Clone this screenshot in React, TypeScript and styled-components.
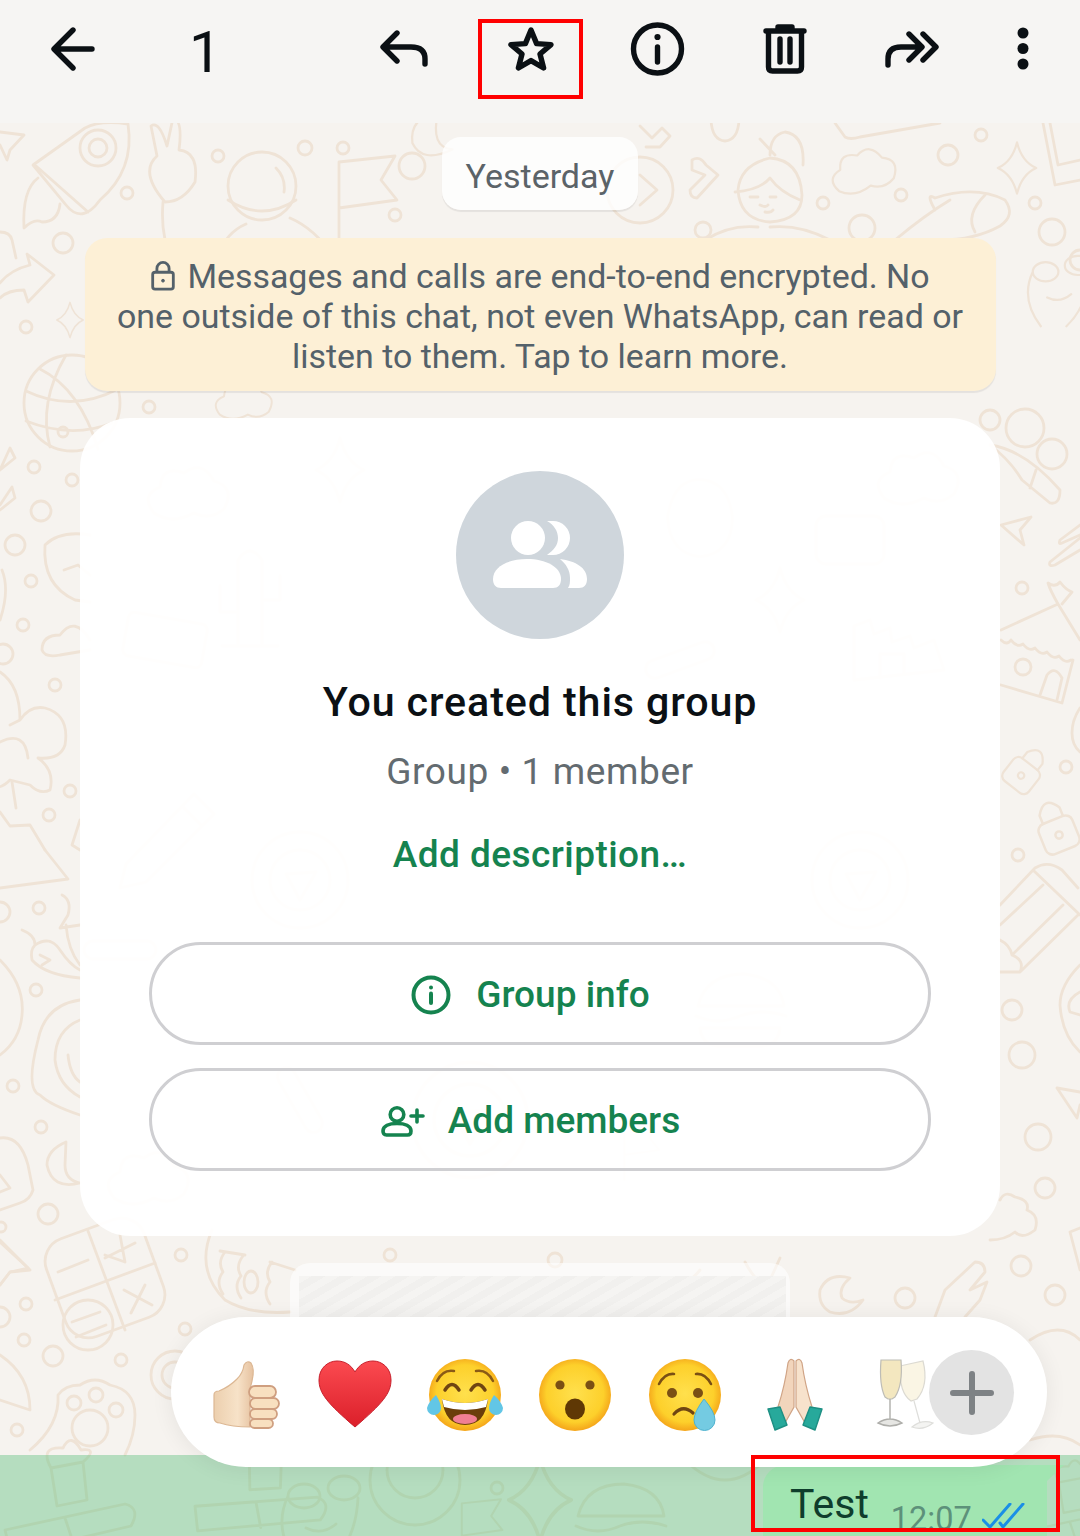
import React from "react";
import styled, { createGlobalStyle } from "styled-components";

/* ---------- doodle wallpaper ---------- */
const t = (x: number, y: number, s: string, r = 0, k = 1) =>
  `<g transform="translate(${x} ${y}) rotate(${r}) scale(${k})">${s}</g>`;
const rings = (list: number[][]) => list.map(([x, y, r]) => `<circle cx="${x}" cy="${y}" r="${r}"/>`).join("");
const p = (d: string) => `<path d="${d}"/>`;
const star4 = p("M0 -32 Q6 -8 24 0 Q6 8 0 32 Q-6 8 -24 0 Q-6 -8 0 -32Z");
const flag = p("M-26 -38 V50 M-26 -38 L30 -44 L16 -20 L32 0 L-26 8");
const hand = p("M-20 30 Q-46 0 -28 -16 L-34 -46 Q-26 -52 -18 -26 L-12 -54 Q-2 -52 -6 -22 Q14 -20 10 10 Q-2 30 -20 30Z M-22 30 Q-26 80 0 100");
const astro = `<circle r="34"/>` + p("M14 -18 Q24 -8 22 6 M-34 14 Q0 36 34 14 M-16 38 Q-44 50 -50 92 M28 32 Q56 44 76 78");
const cloud = p("M-36 18 Q-50 0 -30 -8 Q-28 -30 -6 -22 Q12 -36 24 -14 Q46 -8 34 14 Q20 26 4 18 Q-18 30 -36 18Z");
const pencil = p("M-44 34 L24 -36 L44 -16 L-24 52 L-50 58Z M12 -24 L32 -4");
const lock = `<rect x="-20" y="-6" width="40" height="36" rx="8"/>` + p("M-12 -6 V-16 Q0 -36 12 -16 V-6") + `<circle cy="12" r="4"/>`;
const cactus = p("M-12 56 V-30 Q0 -48 12 -30 V56 M12 10 H30 V-14 M-12 22 H-30 V-4 M-28 56 H28");
const castle = p("M-46 40 V-14 L-30 -20 L-26 -6 L-10 -12 L-8 2 L10 -4 L14 8 L34 0 L44 30 Z M-20 38 V14 H4 V34");
const burger = p("M-42 -4 Q-34 -36 4 -36 Q40 -32 44 -4Z M-44 6 Q-22 16 0 6 Q22 -2 46 6 M-40 18 H40 Q38 36 20 36 H-20 Q-38 36 -40 18Z");
const glasses = p("M-34 -4 a16 12 0 1 0 32 0 a16 12 0 1 0 -32 0 M6 -12 a16 12 0 1 0 32 0 a16 12 0 1 0 -32 0 M-34 -4 Q-50 30 -24 64 M36 -2 Q34 40 8 64 M-16 28 Q0 36 14 24");
const target = `<circle r="48"/><circle r="30"/>` + p("M-14 -6 L16 -8 L0 20Z");
const pill = `<rect x="-36" y="-9" width="72" height="18" rx="9"/>`;
const tube = p("M-60 40 L60 14 Q76 18 66 36 L-54 64Z M0 28 L8 52 M-14 -22 L18 -28 L22 10 L-8 16Z M-14 -22 Q-26 -44 -2 -42 Q6 -58 16 -40 Q34 -42 18 -28");

const doodles = [
  // top-left
  p("M33 165 L85 128 Q100 120 128 124 Q135 170 100 200 Q82 225 66 205Z M36 166 L88 212"),
  rings([[98, 148, 18], [98, 148, 9], [127, 193, 6], [63, 243, 10], [218, 156, 6], [26, 327, 6], [149, 407, 6], [305, 148, 7], [343, 148, 6], [412, 166, 13], [395, 215, 6], [208, 283, 8]]),
  p("M38 178 Q22 190 24 228 Q34 218 42 222 Q58 222 60 204"),
  p("M0 132 L24 135 L10 150 L7 160 L0 145"),
  p("M0 283 Q10 270 30 265 L27 254 L54 275 L28 302 L24 290 Q8 290 0 298"),
  p("M0 232 Q10 232 12 240 L16 258"),
  t(70, 320, star4, 0, .55),
  t(185, 172, hand), t(262, 186, astro), t(365, 200, flag),
  t(300, 262, `<ellipse rx="26" ry="18"/>` + p("M-8 4 l8 -10 l4 16 M10 -6 l6 8"), -10),
  t(72, 403, `<circle r="48"/>` + p("M-46 -12 Q0 10 46 -14 M-32 -34 Q8 -14 26 46 M-6 -48 Q-34 0 -22 44 M-46 18 Q0 36 40 20") + `<circle cx="-9" cy="29" r="5"/>`),
  t(245, 402, cloud, 0, .7),
  t(430, 135, p("M10 -28 Q-26 -22 -22 10 Q-10 36 28 18 Q0 16 10 -28Z"), 0, .8),
  // top-right
  `<circle cx="640" cy="190" r="33"/>`, p("M640 175 L657 190 L640 205"),
  p("M640 126 L652 138 L662 128 L670 136 L660 147 L646 147"),
  p("M711 120 Q712 140 725 141 Q738 140 739 120"),
  p("M692 160 Q700 155 706 165 L718 175 L697 198 Q690 198 690 190 L705 175 L692 170Z"),
  p("M738 190 Q740 165 770 158 Q800 160 802 195 Q802 220 770 222 Q740 220 738 190Z M735 192 Q760 190 770 178 Q780 192 800 200"),
  p("M760 139 L775 155 M770 155 Q770 135 785 132 Q805 135 803 165"),
  p("M750 197 h8 M770 197 h6 M760 205 q6 3 8 0 M765 212 q6 1 8 -2"),
  p("M705 240 Q730 224 758 227 M770 227 Q800 224 830 240"), `<circle cx="703" cy="230" r="8"/>`,
  p("M835 123 L845 137 Q850 140 860 137 L940 123"),
  t(865, 172, cloud, -10, .8),
  rings([[948, 155, 10], [981, 135, 6], [901, 195, 6], [823, 203, 6], [1035, 203, 6], [862, 228, 13], [1052, 232, 13], [1080, 260, 10]]),
  t(1017, 168, star4, 0, .8),
  p("M1043 123 L1055 185 L1080 180 M1050 123 L1058 165 L1080 160"),
  p("M935 198 Q975 185 1005 200 Q1016 215 1000 226 Q975 240 940 240 M895 240 Q925 215 950 200 M935 198 Q925 192 935 210 M985 195 Q965 215 975 232"),
  t(1060, 275, glasses, 0, .8),
  // left strip
  rings([[34, 467, 6], [72, 480, 6], [41, 511, 10], [15, 545, 10], [31, 581, 6], [23, 625, 6], [55, 685, 6], [70, 791, 6], [49, 815, 6], [3, 654, 10], [0, 912, 10], [39, 908, 6], [36, 990, 6], [13, 1086, 6], [41, 1127, 6], [48, 1214, 10], [1, 1227, 5]]),
  p("M0 470 L10 448 L15 458 L0 470 M0 505 L12 487 L15 498 L0 510"),
  p("M2 570 Q10 590 0 620"),
  p("M45 545 Q60 530 90 535 M45 545 Q42 585 75 600 L90 602 M64 570 L78 565 L90 575"),
  p("M90 640 Q75 615 60 635 Q42 635 42 650 Q45 658 60 655 L90 650"),
  p("M0 672 Q20 685 20 720 L10 725 M20 720 Q30 705 45 708 Q70 715 65 745 Q60 760 38 758 Q55 770 50 790 Q40 795 30 785 L10 780 Q0 790 -5 785 M0 742 Q25 730 28 758"),
  p("M12 782 L16 808 M0 812 L10 826 L30 825 L45 850"),
  p("M80 820 L72 845 L80 850"),
  p("M45 850 L68 879 L0 888"),
  p("M0 960 Q25 985 22 1015 Q20 1040 0 1055"),
  p("M22 930 Q35 935 35 945 Q30 950 32 960 Q45 975 80 978 M35 945 Q50 935 60 950 Q70 965 80 970 M40 955 L50 960 L42 965"),
  p("M62 895 Q72 900 68 915 L60 928 L80 925 M66 925 Q68 950 80 965"),
  p("M80 1000 Q45 1005 38 1040 Q25 1090 40 1095 Q50 1105 80 1115 M80 1020 Q55 1030 55 1060 Q58 1085 80 1097 M68 1055 Q70 1075 80 1082"),
  p("M66 1142 Q47 1150 47 1165 Q52 1190 80 1183 Q65 1180 65 1165Z"),
  p("M0 1138 Q20 1135 28 1165 L33 1190 Q30 1200 20 1203 L0 1210 M0 1175 L10 1188 L0 1192"),
  p("M0 1240 L30 1270 L10 1272 L0 1285"),
  // bottom-left
  t(105, 1278, `<rect x="-52" y="-52" width="104" height="104" rx="24"/>`, -20),
  p("M88 1231 L125 1330 M55 1300 L155 1263 M105 1255 L125 1262 M120 1235 L125 1262 M105 1258 L135 1243 M124 1290 L152 1305 M145 1285 L131 1313 M58 1272 L88 1260"),
  `<circle cx="88" cy="1325" r="25"/>`, p("M72 1322 L100 1312 M76 1337 L106 1325"),
  rings([[26, 1304, 6], [24, 1340, 6], [53, 1356, 10], [0, 1317, 10], [121, 1360, 6], [181, 1255, 6], [185, 1329, 6], [17, 1430, 6]]),
  p("M0 1242 L28 1268 L10 1272 L0 1285"),
  p("M0 1355 Q30 1375 30 1410 L0 1400"),
  p("M30 1450 Q60 1425 58 1395 Q65 1385 80 1385 Q95 1375 110 1385 Q135 1390 135 1415 Q135 1435 125 1455"),
  rings([[74, 1403, 7], [96, 1395, 7], [116, 1410, 7], [90, 1428, 18], [175, 1375, 24], [175, 1375, 13]]),
  p("M212 1230 Q195 1270 225 1300 Q250 1315 290 1312 M220 1251 L245 1255 M225 1252 q-8 10 -2 20 q-8 10 0 22 M243 1256 q-8 10 -2 20 q-8 10 0 22 M272 1262 q-8 10 -2 20 q-8 10 0 22 M270 1262 L295 1270"),
  `<ellipse cx="251" cy="1282" rx="7" ry="11"/>`,
  // right strip
  rings([[1025, 428, 19], [1052, 454, 15], [990, 420, 10], [1022, 588, 6], [1066, 767, 6], [1018, 855, 6], [1012, 1010, 10], [1022, 1055, 13], [1038, 1137, 13], [1045, 1188, 10], [1021, 1266, 10], [1055, 1295, 10], [905, 1298, 10], [555, 1260, 7], [390, 1255, 6]]),
  p("M990 445 Q1025 450 1060 490 Q1060 505 1050 503 L1022 480 Q1010 460 990 445 M1036 470 L1030 488"),
  p("M1001 525 L1031 517 L1020 530 L1024 545Z"),
  p("M1080 525 L1060 540 Q1058 545 1062 543 L1080 535 M1080 538 L1050 562 Q1048 567 1055 565 L1080 550"),
  p("M1001 630 L1058 604 L1080 640 M1058 604 Q1050 590 1048 583 Q1055 588 1060 582 Q1066 590 1072 592 L1062 604"),
  p("M1001 640 q6 6 10 0 q6 8 12 4 q6 8 12 4 q6 8 12 4 q6 8 12 4 q6 8 12 4"),
  p("M1001 685 L1062 703 L1073 660 M1040 695 L1047 675 Q1055 665 1062 678 L1057 700"),
  `<circle cx="1023" cy="667" r="8"/>`,
  p("M1080 708 Q1072 720 1072 733 Q1072 745 1080 752"),
  t(1027, 768, lock, 38, .8), t(1055, 825, lock, -22, .9),
  p("M1000 905 L1035 868 Q1048 860 1062 870 L1078 888 M1043 885 L1000 925 M1063 905 L1012 955 M1033 870 L1080 915 M1000 972 L1020 972 L1078 915 M1000 940 Q1010 945 1012 955 Q1025 960 1020 972"),
  p("M1080 965 Q1060 985 1060 1005 Q1062 1035 1080 1052 M1080 992 Q1065 1000 1070 1012 L1080 1015"),
  p("M1057 1088 L1080 1092 M1057 1088 L1077 1118 L1080 1105"),
  p("M1000 1200 Q1005 1190 1015 1197 Q1030 1200 1027 1210 Q1040 1215 1035 1230 Q1022 1240 1015 1232 Q1005 1240 990 1240"),
  p("M1070 1232 L1080 1228 M1070 1232 L1080 1270"),
  p("M820 1290 Q828 1272 850 1278 Q838 1288 842 1298 Q850 1305 863 1300 Q850 1318 830 1312 Q818 1305 820 1290Z"),
  p("M935 1317 L945 1290 L975 1262 Q985 1262 985 1272 L970 1290 L987 1282 L980 1300 L965 1317"),
  p("M1030 1340 Q1060 1320 1080 1340 M1030 1440 Q1060 1430 1080 1445"),
  p("M745 1262 Q760 1290 770 1280 L780 1258"), p("M645 1280 Q675 1300 700 1270"),
  // seen faintly through the card
  t(190, 495, cloud), t(340, 470, star4), t(250, 590, cactus),
  t(165, 640, `<rect x="-40" y="-22" width="80" height="44" rx="6"/>`, 10), t(700, 510, p("M-36 8 Q-30 -34 0 -34 Q32 -32 36 8 Q36 48 0 52 Q-34 48 -36 8Z"), 0, .9),
  t(850, 540, `<rect x="-34" y="-24" width="68" height="48" rx="10"/>`), t(920, 480, cloud), t(780, 600, star4), t(680, 660, pill, -20), t(900, 640, castle),
  t(170, 830, pencil), t(300, 880, target), t(120, 950, pill), t(470, 1120, target, 0, 1.2), t(740, 1010, burger), t(860, 880, target),
  t(640, 1150, flag, 0, .6), t(150, 1180, cloud), t(300, 1100, pill, 60),
  // in the green row
  t(65, 1490, tube), t(260, 1475, tube, 8), t(322, 1500, glasses),
  `<circle cx="415" cy="1480" r="45"/><circle cx="415" cy="1470" r="28"/>`,
  t(540, 1500, star4, 0, 1.3), rings([[497, 1488, 6]]), t(480, 1530, flag, 0, .7), t(620, 1520, burger), t(725, 1490, p("M-40 -30 Q0 10 40 -30")), t(1070, 1500, tube, 0, .8),
].join("");

const wallpaper = `<svg xmlns="http://www.w3.org/2000/svg" width="1080" height="1536" viewBox="0 0 1080 1536"><g fill="none" stroke="#efe3d6" stroke-width="2.8" stroke-linecap="round" stroke-linejoin="round">${doodles}</g></svg>`;
const wallpaperUrl = `url("data:image/svg+xml,${encodeURIComponent(wallpaper)}")`;

/* ---------- styles ---------- */
const Global = createGlobalStyle`
  html, body { margin: 0; padding: 0; background: #f6f3ef; }
  body { font-family: Roboto, "Liberation Sans", sans-serif; }
`;

const Page = styled.div`
  position: relative;
  width: 1080px;
  height: 1536px;
  overflow: hidden;
  display: flex;
  flex-direction: column;
  background: #f6f3ef ${wallpaperUrl} 0 0 no-repeat;
`;

const Toolbar = styled.header`
  flex: none;
  height: 123px;
  box-sizing: border-box;
  padding: 0 10px 25px 9px;
  display: flex;
  align-items: center;
  background: #f6f5f3;
  color: #0b1014;
`;

const ToolButton = styled.div<{ $w?: number }>`
  flex: none;
  width: ${(p) => p.$w ?? 127}px;
  display: flex;
  justify-content: center;
  align-items: center;
`;

const Count = styled.div`
  flex: 1;
  margin-left: 52px;
  margin-top: 5px;
  font-size: 58px;
  line-height: 58px;
  font-weight: 400;
`;

const Chat = styled.main`
  flex: none;
  height: 1332px;
  overflow: hidden;
  box-sizing: border-box;
  padding-top: 14px;
  display: flex;
  flex-direction: column;
  align-items: center;
`;

const DateChip = styled.div`
  flex: none;
  width: 196px;
  height: 73px;
  box-sizing: border-box;
  padding-top: 5px;
  display: flex;
  align-items: center;
  justify-content: center;
  border-radius: 19px;
  background: rgba(255, 255, 255, 0.8);
  box-shadow: 0 2px 1px rgba(0, 0, 0, 0.07);
  color: #5b6368;
  font-size: 34px;
`;

const Notice = styled.div`
  flex: none;
  width: 911px;
  height: 153px;
  margin-top: 28px;
  box-sizing: border-box;
  padding-top: 19px;
  border-radius: 22px;
  background: #fdf0d6;
  box-shadow: 0 2px 1px rgba(0, 0, 0, 0.07);
  color: #54616a;
  font-size: 33.9px;
  line-height: 40px;
  text-align: center;
`;

const LockIcon = styled.svg`
  width: 26px;
  height: 30px;
  vertical-align: -3px;
  margin-right: 11px;
`;

const Card = styled.section`
  flex: none;
  width: 920px;
  height: 818px;
  margin-top: 27px;
  box-sizing: border-box;
  padding: 53px 69px 0;
  border-radius: 50px;
  background: rgba(255, 255, 255, 0.95);
  display: flex;
  flex-direction: column;
  align-items: center;
`;

const Avatar = styled.svg`
  flex: none;
  width: 168px;
  height: 168px;
`;

const Title = styled.h2`
  margin: 37px 0 0;
  font-size: 41.2px;
  line-height: 52px;
  font-weight: 500;
  letter-spacing: 0.9px;
  color: #0b1014;
`;

const Meta = styled.div`
  margin-top: 22px;
  font-size: 37px;
  line-height: 44px;
  color: #636b70;
  letter-spacing: 0.6px;
`;

const Link = styled.div`
  margin-top: 39px;
  font-size: 37px;
  line-height: 44px;
  font-weight: 500;
  letter-spacing: 0.45px;
  color: #15834f;
`;

const PillButton = styled.div<{ $top: number; $gap: number }>`
  flex: none;
  width: 782px;
  height: 103px;
  margin-top: ${(p) => p.$top}px;
  box-sizing: border-box;
  padding: 2px 19px 0 0;
  border: 3px solid #cfcfd2;
  border-radius: 52px;
  display: flex;
  align-items: center;
  justify-content: center;
  gap: ${(p) => p.$gap}px;
  font-size: 37px;
  font-weight: 500;
  color: #15834f;
`;

const Quoted = styled.div`
  flex: none;
  width: 500px;
  height: 192px;
  margin-top: 27px;
  box-sizing: border-box;
  padding: 13px 4px 0 9px;
  border-radius: 20px 20px 0 0;
  background: rgba(255, 255, 255, 0.6);
`;

const QuotedHatch = styled.div`
  height: 100%;
  background: repeating-linear-gradient(-30deg, #f5f4f2 0 7px, #f1f0ee 7px 14px);
`;

const SelectedRow = styled.div`
  flex: none;
  height: 81px;
  box-sizing: border-box;
  padding: 10px 33px 0 0;
  overflow: hidden;
  display: flex;
  justify-content: flex-end;
  align-items: flex-start;
  background: rgba(90, 190, 125, 0.42);
`;

const Bubble = styled.div`
  position: relative;
  width: 284px;
  height: 120px;
  box-sizing: border-box;
  padding: 15px 0 0 27px;
  display: flex;
  align-items: flex-start;
  border-radius: 22px 0 22px 22px;
  background: #a1e5b1;
  &::after {
    content: "";
    position: absolute;
    right: -17px;
    top: 0;
    border-top: 16px solid #a1e5b1;
    border-right: 17px solid transparent;
  }
`;

const BubbleText = styled.span`
  font-size: 41px;
  line-height: 48px;
  color: #0f3d2c;
`;

const BubbleTime = styled.span`
  margin: 19px 0 0 22px;
  font-size: 32.5px;
  line-height: 40px;
  color: #5d917a;
`;

const Ticks = styled.svg`
  width: 44px;
  height: 26px;
  margin: 23px 0 0 10px;
  flex: none;
`;

const ReactionBar = styled.div`
  position: absolute;
  left: 171px;
  top: 1317px;
  width: 876px;
  height: 150px;
  box-sizing: border-box;
  padding-left: 19px;
  border-radius: 75px;
  background: #fff;
  box-shadow: 0 2px 22px rgba(0, 0, 0, 0.07);
  display: flex;
  align-items: center;
`;

const EmojiCell = styled.div`
  flex: none;
  width: 110px;
  display: flex;
  justify-content: center;
  padding-top: 6px;
`;

const EmojiSvg = styled.svg`
  width: 76px;
  height: 76px;
  display: block;
`;

const PlusButton = styled.div`
  position: absolute;
  right: 33px;
  top: 33px;
  width: 85px;
  height: 85px;
  border-radius: 50%;
  background: #e3e3e3;
  display: flex;
  align-items: center;
  justify-content: center;
`;

const RedBox = styled.div<{ $l: number; $t: number; $w: number; $h: number }>`
  position: absolute;
  left: ${(p) => p.$l}px;
  top: ${(p) => p.$t}px;
  width: ${(p) => p.$w}px;
  height: ${(p) => p.$h}px;
  box-sizing: border-box;
  border: 4px solid #ff0000;
  pointer-events: none;
`;

/* ---------- helpers ---------- */
const Ic: React.FC<{ w: number; h: number; children: React.ReactNode }> = ({ w, h, children }) => (
  <svg width={w} height={h} viewBox={`0 0 ${w} ${h}`} fill="none" stroke="#0b1014" strokeWidth={5.4} strokeLinecap="round" strokeLinejoin="round">
    {children}
  </svg>
);

const Face: React.FC<{ id: string; children: React.ReactNode }> = ({ id, children }) => (
  <EmojiSvg viewBox="0 0 76 76">
    <defs>
      <radialGradient id={id} cx="50%" cy="48%" r="55%">
        <stop offset="0%" stopColor="#ffe04d" />
        <stop offset="72%" stopColor="#fdd02b" />
        <stop offset="100%" stopColor="#f29a16" />
      </radialGradient>
    </defs>
    <circle cx="38" cy="38" r="36" fill={`url(#${id})`} />
    {children}
  </EmojiSvg>
);

export default function App() {
  return (
    <Page>
      <Global />
      <Toolbar>
        <ToolButton $w={128}>
          <Ic w={44} h={44}>
            <path d="M22 3 L3 22 L22 41 M4 22 H41" />
          </Ic>
        </ToolButton>
        <Count>1</Count>
        <ToolButton>
          <Ic w={48} h={40}>
            <path d="M17 4 L3 18 L17 32 M4 18 H31 Q45 18 45 30 V35" />
          </Ic>
        </ToolButton>
        <ToolButton>
          <Ic w={48} h={46}>
            <path d="M24 4 L29.6 17.6 L44 18.6 L33 28 L36.6 42 L24 34.6 L11.4 42 L15 28 L4 18.6 L18.4 17.6Z" />
          </Ic>
        </ToolButton>
        <ToolButton>
          <Ic w={56} h={56}>
            <circle cx="27.5" cy="28" r="24" />
            <path d="M27.5 26 V41" />
            <circle cx="27.5" cy="16" r="1.6" fill="#0b1014" strokeWidth={3} />
          </Ic>
        </ToolButton>
        <ToolButton>
          <Ic w={44} h={50}>
            <path d="M3 7 H41 M15 6 V3 H29 V6" />
            <path d="M5.5 8 V43 Q5.5 47 9.5 47 H34.5 Q38.5 47 38.5 43 V8" />
            <path d="M17 15 V38 M27 15 V38" />
          </Ic>
        </ToolButton>
        <ToolButton>
          <Ic w={54} h={40}>
            <path d="M3 36 V30 Q3 18 16 18 H36 M24 5 L37 18 L24 31 M38 5 L51 18 L38 31" />
          </Ic>
        </ToolButton>
        <ToolButton $w={95}>
          <svg width="14" height="44" viewBox="0 0 14 44" fill="#0b1014">
            <circle cx="7" cy="6" r="5.5" />
            <circle cx="7" cy="21.5" r="5.5" />
            <circle cx="7" cy="37" r="5.5" />
          </svg>
        </ToolButton>
      </Toolbar>

      <Chat>
        <DateChip>Yesterday</DateChip>
        <Notice>
          <LockIcon viewBox="0 0 26 32" fill="none" stroke="#54616a" strokeWidth={3}>
            <rect x="2" y="12" width="22" height="18" rx="2.5" />
            <path d="M6.5 12 V8 a6.5 6.5 0 0 1 13 0 V12" />
            <circle cx="13" cy="21" r="1.5" fill="#54616a" strokeWidth={1} />
          </LockIcon>
          Messages and calls are end-to-end encrypted. No
          <br />
          one outside of this chat, not even WhatsApp, can read or
          <br />
          listen to them. Tap to learn more.
        </Notice>

        <Card>
          <Avatar viewBox="0 0 168 168">
            <circle cx="84" cy="84" r="84" fill="#cfd6dc" />
            <g fill="#fff">
              <circle cx="72" cy="67" r="17" />
              <path d="M37 108 C37 96 52 88 71 88 C90 88 105 96 105 108 C105 114 102 117 97 117 H45 C40 117 37 114 37 108Z" />
              <path d="M91 50 H97 A17 17 0 0 1 97 84 H91 C 98 79 102 74 102 67 C 102 60 98 54 91 50Z" />
              <path d="M104 88 C120 90 131 97 131 108 C131 114 128 117 123 117 H112 C114 114 114 111 114 107 C114 99 110 93 104 88Z" />
            </g>
          </Avatar>
          <Title>You created this group</Title>
          <Meta>Group • 1 member</Meta>
          <Link>Add description…</Link>
          <PillButton $top={65} $gap={25}>
            <svg width="40" height="40" viewBox="0 0 40 40" fill="none" stroke="#15834f" strokeWidth={4} strokeLinecap="round">
              <circle cx="20" cy="20" r="17.5" />
              <path d="M20 18.5 V28" />
              <circle cx="20" cy="12.5" r="1" fill="#15834f" strokeWidth={2} />
            </svg>
            Group info
          </PillButton>
          <PillButton $top={23} $gap={23}>
            <svg width="44" height="32" viewBox="0 0 44 32" fill="none" stroke="#15834f" strokeWidth={3.6} strokeLinecap="round" strokeLinejoin="round">
              <circle cx="16" cy="9.5" r="6.8" />
              <path d="M2 26 C2 21 8 18.5 16 18.5 C24 18.5 30 21 30 26 C30 28.5 29 30 26.5 30 H5.5 C3 30 2 28.5 2 26Z" />
              <path d="M30 11 H42 M36 5 V17" />
            </svg>
            Add members
          </PillButton>
        </Card>

        <Quoted>
          <QuotedHatch />
        </Quoted>
      </Chat>

      <SelectedRow>
        <Bubble>
          <BubbleText>Test</BubbleText>
          <BubbleTime>12:07</BubbleTime>
          <Ticks viewBox="0 0 44 26" fill="none" stroke="#1a8fe6" strokeWidth="3" strokeLinecap="round">
            <path d="M1 17 L8 24 L28 1 M18 20 L21 24 L41 1" />
          </Ticks>
        </Bubble>
      </SelectedRow>

      <ReactionBar>
        <EmojiCell>
          <EmojiSvg viewBox="0 0 76 76">
            <defs>
              <linearGradient id="skin" x1="0" y1="0" x2="1" y2="0">
                <stop offset="0%" stopColor="#eccfae" />
                <stop offset="60%" stopColor="#f7e2c8" />
                <stop offset="100%" stopColor="#e6c2a0" />
              </linearGradient>
            </defs>
            <path d="M7 38 Q7 34 12 34 Q22 30 30 22 Q36 16 37 8 Q40 3 44 6 Q48 12 45 24 L43 32 V70 Q25 70 13 66 Q7 66 7 60Z" fill="url(#skin)" stroke="#dcb793" strokeWidth="1.2" />
            <g fill="#f8e0c0" stroke="#cf9f80" strokeWidth="1.8">
              <rect x="42" y="29" width="27" height="12" rx="6" />
              <rect x="43" y="41" width="29" height="11" rx="5.5" />
              <rect x="43" y="52" width="27" height="10" rx="5" />
              <rect x="43" y="62" width="23" height="9" rx="4.5" />
            </g>
          </EmojiSvg>
        </EmojiCell>
        <EmojiCell>
          <EmojiSvg viewBox="0 0 76 76">
            <defs>
              <linearGradient id="hrt" x1="0" y1="0" x2="0" y2="1">
                <stop offset="0%" stopColor="#fb4a50" />
                <stop offset="100%" stopColor="#db1f2a" />
              </linearGradient>
            </defs>
            <path d="M38 70 C10 46 2 36 2 23 C2 11 11 4 20 4 C28 4 34 8 38 15 C42 8 48 4 56 4 C65 4 74 11 74 23 C74 36 66 46 38 70Z" fill="url(#hrt)" stroke="#c71f2b" strokeWidth="1" />
          </EmojiSvg>
        </EmojiCell>
        <EmojiCell>
          <Face id="joy">
            <path d="M10 24 Q16 12 27 14 M66 24 Q60 12 49 14" fill="none" stroke="#8a5a16" strokeWidth="2.5" strokeLinecap="round" />
            <path d="M18 33 Q25 22 32 33 M44 33 Q51 22 58 33" fill="none" stroke="#6f4512" strokeWidth="3.5" strokeLinecap="round" />
            <path d="M15 42 Q38 50 61 42 Q58 68 38 68 Q18 68 15 42Z" fill="#6b3e0a" />
            <path d="M15 42 Q38 50 61 42 L59 50 Q38 56 17 50Z" fill="#fff" />
            <ellipse cx="38" cy="62" rx="12" ry="5" fill="#f07f93" />
            <path d="M9 38 Q14 46 14 51 A7 7 0 0 1 0 51 Q2 44 9 38Z M67 38 Q62 46 62 51 A7 7 0 0 0 76 51 Q74 44 67 38Z" fill="#62c6e6" />
          </Face>
        </EmojiCell>
        <EmojiCell>
          <Face id="wow">
            <circle cx="23" cy="28" r="4.6" fill="#7a4f14" />
            <circle cx="53" cy="28" r="4.6" fill="#7a4f14" />
            <ellipse cx="38" cy="52" rx="10" ry="10.5" fill="#5f3805" />
          </Face>
        </EmojiCell>
        <EmojiCell>
          <Face id="sad">
            <path d="M12 27 Q18 16 27 17 M64 27 Q58 16 49 17" fill="none" stroke="#7a4f14" strokeWidth="2.6" strokeLinecap="round" />
            <circle cx="25" cy="36" r="5" fill="#7a4f14" />
            <circle cx="51" cy="36" r="5" fill="#7a4f14" />
            <path d="M27 57 Q36 47 46 56" fill="none" stroke="#6f4512" strokeWidth="3.2" strokeLinecap="round" />
            <path d="M57 42 Q68 55 68 63 A10.5 10.5 0 0 1 47 63 Q47 55 57 42Z" fill="#74cbe2" stroke="#4fb2cf" strokeWidth="1" />
          </Face>
        </EmojiCell>
        <EmojiCell>
          <EmojiSvg viewBox="0 0 76 76">
            <path d="M37 4 Q33 0 31 6 Q28 28 21 50 L28 66 L37 50Z" fill="#f2d5bc" stroke="#d0a486" strokeWidth="1.2" />
            <path d="M39 4 Q43 0 45 6 Q48 28 55 50 L48 66 L39 50Z" fill="#f7e2cc" stroke="#d0a486" strokeWidth="1.2" />
            <path d="M11 52 L18 73 L30 68 L23 50Z M65 52 L58 73 L46 68 L53 50Z" fill="#27a99b" stroke="#1d8f83" strokeWidth="1.4" strokeLinejoin="round" />
          </EmojiSvg>
        </EmojiCell>
        <EmojiCell>
          <EmojiSvg viewBox="0 0 76 76">
            <path d="M33 9 L56 4 Q62 28 50 42 L44 44 Q32 36 33 9Z" fill="#faf5e4" stroke="#dcdad2" strokeWidth="1.2" />
            <path d="M47 44 L53 66 M45 70 Q55 62 66 66 Q56 74 45 70Z" fill="#f4f4f2" stroke="#dededb" strokeWidth="1.2" />
            <path d="M14 3 H34 Q36 28 28 40 L25 42 H21 L18 40 Q12 28 14 3Z" fill="#f3e7bf" stroke="#bebdb6" strokeWidth="1.2" />
            <path d="M23 42 V62 M11 66 Q23 58 35 66 Q23 72 11 66Z" fill="#e6e6e3" stroke="#aeaeaa" strokeWidth="1.4" />
          </EmojiSvg>
        </EmojiCell>
        <PlusButton>
          <svg width="44" height="44" viewBox="0 0 44 44" stroke="#7e8285" strokeWidth="6" strokeLinecap="round">
            <path d="M22 3 V41 M3 22 H41" />
          </svg>
        </PlusButton>
      </ReactionBar>

      <RedBox $l={478} $t={19} $w={105} $h={80} />
      <RedBox $l={751} $t={1455} $w={309} $h={77} />
    </Page>
  );
}
